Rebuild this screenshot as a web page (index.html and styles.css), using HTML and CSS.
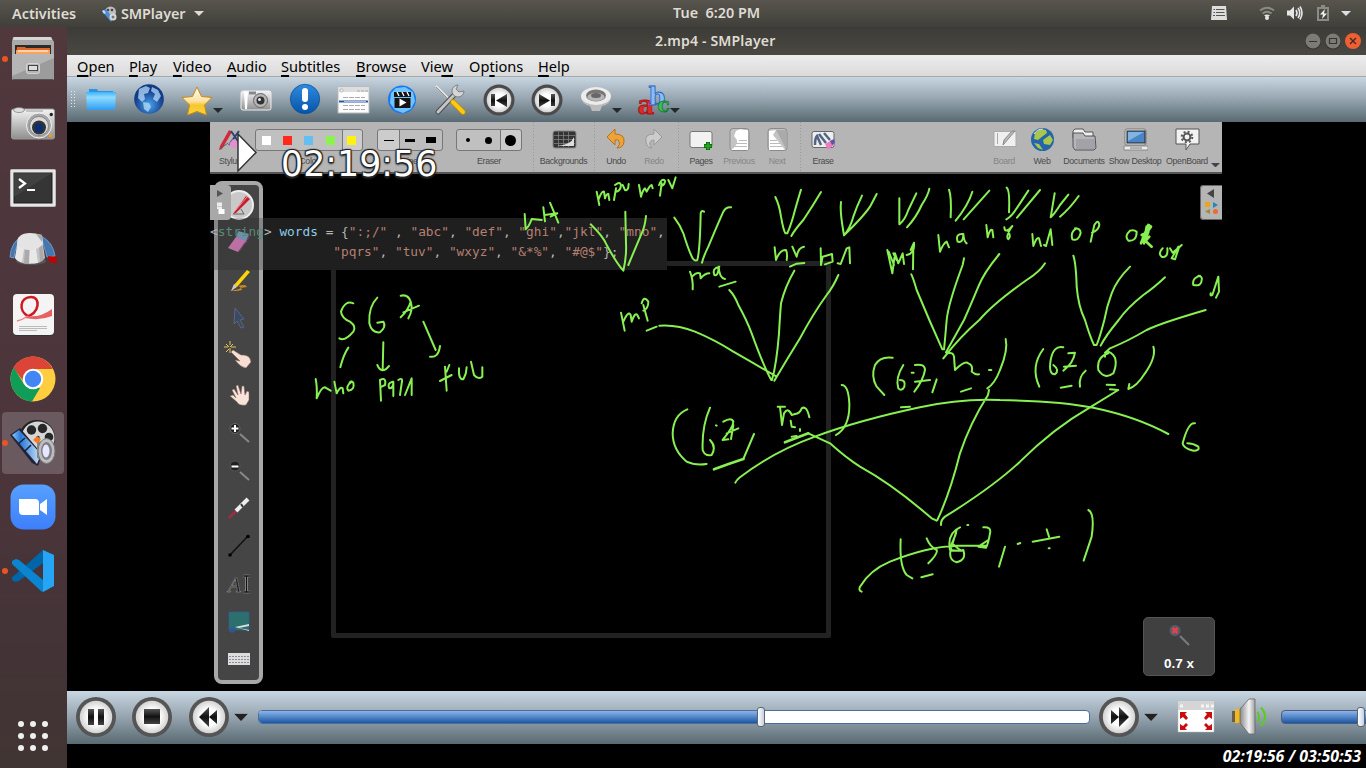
FILE: index.html
```html
<!DOCTYPE html>
<html lang="en">
<head>
<meta charset="utf-8">
<title>2.mp4 - SMPlayer</title>
<link rel="stylesheet" href="styles.css">
</head>
<body>
<svg class="defs" width="0" height="0" aria-hidden="true">
  <defs>
    <linearGradient id="silver" x2="0" y2="1"><stop stop-color="#f4f4f4"/><stop offset="1" stop-color="#8f8f8f"/></linearGradient>
    <linearGradient id="dark" x2="0" y2="1"><stop stop-color="#555"/><stop offset=".5" stop-color="#111"/><stop offset="1" stop-color="#444"/></linearGradient>
    <radialGradient id="disc"><stop offset=".5" stop-color="#fff"/><stop offset="1" stop-color="#d2d2d2"/></radialGradient>
    <radialGradient id="globe" cx=".5" cy=".7"><stop stop-color="#4aa4ee"/><stop offset="1" stop-color="#123a86"/></radialGradient>
    <linearGradient id="folder" x2="0" y2="1"><stop stop-color="#3fb4fb"/><stop offset=".3" stop-color="#8fdcff"/><stop offset="1" stop-color="#2e9df2"/></linearGradient>
    <linearGradient id="gold" x2="0" y2="1"><stop stop-color="#fffdf0"/><stop offset=".5" stop-color="#fbe3a8"/><stop offset=".65" stop-color="#f9c52c"/><stop offset="1" stop-color="#fbd63c"/></linearGradient>
    <linearGradient id="blueball" x2="0" y2="1"><stop stop-color="#2f8ade"/><stop offset="1" stop-color="#0654a8"/></linearGradient>
    <linearGradient id="zoomg" x2="0" y2="1"><stop stop-color="#57a0ff"/><stop offset="1" stop-color="#3d7ffb"/></linearGradient>
    <linearGradient id="film"><stop stop-color="#8ac6f5"/><stop offset=".3" stop-color="#2a79d8"/><stop offset="1" stop-color="#d3e6f8"/></linearGradient>
    <linearGradient id="cone" x2="1" y2="0"><stop stop-color="#8a8a8a"/><stop offset=".6" stop-color="#f4f4f4"/><stop offset="1" stop-color="#a0a0a0"/></linearGradient>
  </defs>
</svg>
<div class="desktop">
  <header class="topbar">
    <span class="activities">Activities</span>
    <svg class="appicon" width="16" height="16" viewBox="0 0 16 16"><circle cx="9.500" cy="6" r="5.500" fill="#bdbdbd"/><circle cx="7" cy="4" r="1.300" fill="#444"/><circle cx="11" cy="4" r="1.300" fill="#444"/><path d="M1 5l4-2 7 9-2 4z" fill="#4b8fd8"/><path d="M1 5l2-1 2 3-2 1z" fill="#bcdcf8"/><circle cx="12" cy="11" r="3.500" fill="#d8d8d8"/><circle cx="12" cy="11" r="1.500" fill="#777"/></svg>
    <span class="appname">SMPlayer</span>
    <i class="caret"></i>
    <span class="clock">Tue&nbsp; 6:20 PM</span>
    <svg class="tray" width="160" height="27" viewBox="1206 0 160 27">
      <path d="M1212 6h14l1 14h-16z" fill="#dedede"/><path d="M1213.500 9.500h11M1213.500 12.500h11M1213 15.500h12" stroke="#57554e" stroke-width="1"/><path d="M1215.500 7v10" stroke="#dedede"/>
      <g fill="none" stroke="#8c8a85" stroke-width="1.800"><path d="M1260 10.500q7-5.500 14 0"/><path d="M1262.500 13.500q4.500-3.500 9 0"/></g><path d="M1264 15.500q3-2.200 6 0l-3 2z" fill="#e6e6e6"/><circle cx="1267" cy="18" r="2" fill="#e6e6e6"/>
      <path d="M1287 10.500h3l4-4v13l-4-4h-3z" fill="#e6e6e6"/><g fill="none" stroke="#e6e6e6" stroke-width="1.600"><path d="M1296 10q2 3 0 6M1298 8q3.500 5 0 10M1300 6.500q4 6.500 0 13"/></g>
      <path d="M1318 8h10v12h-10zM1321 6h4" fill="none" stroke="#8c8a85" stroke-width="2"/><path d="M1325 9l-5 5.500h3l-1 4.500 5-5.500h-3z" fill="#f0f0f0"/>
      <path d="M1341 11h10l-5 5z" fill="#dedede"/>
    </svg>
  </header>
  <div class="main">
    <nav class="dock">
      <div class="slot running"><svg width="46" height="46" viewBox="10 36 46 46"><path d="M13 37h38l3 5v35h-42V42z" fill="#a9a9a9"/><path d="M14 37h37l1 3H13z" fill="#d6d6d6"/><path d="M15 45h36v10H15z" fill="#2b2b2b"/><path d="M17 47h8l1 1h24v7H16z" fill="#e0672a"/><path d="M16 50h34v5H16z" fill="#f5a45e"/><path d="M18 51h30" stroke="#fff"/><path d="M12 54h42v26H12z" fill="#9c9c9c"/><path d="M12 54h42v4L12 76z" fill="#b5b5b5"/><path d="M12.500 79.500h41" stroke="#555"/><rect x="26.500" y="63.500" width="13" height="10" rx="2" fill="#b5b5b5" stroke="#d5d5d5"/><rect x="28.500" y="65.500" width="9" height="5" fill="#ddd" stroke="#444"/></svg></div>
      <div class="slot"><svg width="46" height="46" viewBox="10 101 46 46"><rect x="11.500" y="110" width="43" height="30" rx="2" fill="url(#silver)" stroke="#9b9b9b"/><ellipse cx="19" cy="111" rx="5.500" ry="2.500" fill="#ddd" stroke="#777" stroke-width=".7"/><path d="M26 112h17" stroke="#999"/><circle cx="39" cy="126.500" r="12.500" fill="#a5a5a5" stroke="#f2f2f2"/><circle cx="39" cy="127" r="9.500" fill="#dcdcdc" stroke="#888"/><circle cx="39" cy="128.500" r="7" fill="#333"/><rect x="35" y="125" width="8" height="8" rx="2" fill="#0c2f73"/><circle cx="51.300" cy="115.500" r="1.700" fill="#222"/><rect x="49" y="135" width="3" height="3" fill="#f39a1f"/></svg></div>
      <div class="slot"><svg width="46" height="46" viewBox="10 165 46 46"><rect x="10.500" y="170.500" width="45" height="37" rx="1" fill="#e6e6e6" stroke="#bbb"/><rect x="14" y="174" width="38" height="30" fill="#353535" stroke="#1d1d1d"/><path d="M14 174h38L14 198z" fill="#4a4a4a" opacity=".6"/><path d="M19 180l6 4.500-6 4.500M27 191h8" fill="none" stroke="#fff" stroke-width="2.200"/></svg></div>
      <div class="slot"><svg width="50" height="46" viewBox="8 228 50 46"><path d="M10 257q1-16 14-22-9 10-10 23zM41 236q12 6 14 20l-8 1z" fill="#4676ae" stroke="#6b9acb"/><path d="M48 256l9 1-1 7-7-3z" fill="#c40000"/><ellipse cx="31" cy="261" rx="15" ry="4" fill="#555"/><path d="M18 238q13-8 24 0l3 20q-4 6-15 6t-15-6z" fill="#c4c4c4"/><path d="M18 242l6 7-2 13q-5-1-7-4zM30 249h6l2 14h-9z" fill="#f4f4f4" opacity=".75"/><path d="M25 249l4-1v16h-5zM39 247l3-3 2 15-4 3z" fill="#999" opacity=".6"/><path d="M17 244q0-11 13-11 5 0 12 2l1 9q-5 6-13 6-9 0-13-6z" fill="#e4e4e4"/><path d="M36 234l6 1v7z" fill="#aaa"/></svg></div>
      <div class="slot"><svg width="46" height="46" viewBox="10 291 46 46"><rect x="13" y="293" width="41" height="42" rx="4" fill="#333"/><rect x="13" y="293" width="41" height="41" rx="4" fill="#f4f4f4"/><path d="M26 316c14-4 15-20 5-20-11 0-13 14-3 19" fill="none" stroke="#cf1820" stroke-width="2.500"/><path d="M27 315q13 2 25-7v7q-12 5-27 2z" fill="#e66064"/><path d="M17 320q5-1 11-5" stroke="#ef8585" stroke-width="1.500" fill="none"/><path d="M19 325.500h28M19 327.500h28M19 329.500h18" stroke="#bbb"/></svg></div>
      <div class="slot"><svg width="46" height="46" viewBox="10 356 46 46"><circle cx="33" cy="379" r="22.500" fill="#ffcd40"/><path d="M33 356.500a22.500 22.500 0 0 1 19.800 12.500H33L25 383 13.200 368A22.500 22.500 0 0 1 33 356.500z" fill="#db4437"/><path d="M13.800 367.500L24.500 385 33 388h7l-8 13.500A22.500 22.500 0 0 1 13.800 367.500z" fill="#0f9d58"/><circle cx="33" cy="379" r="10.300" fill="#fff"/><circle cx="33" cy="379" r="8.200" fill="#4285f4"/></svg></div>
      <div class="slot running active"><svg width="48" height="48" viewBox="9 419 48 48"><circle cx="38" cy="438" r="18" fill="#222"/><circle cx="39" cy="438" r="16.500" fill="#d6d6d6"/><g fill="#272727"><circle cx="32.500" cy="430" r="4.700"/><circle cx="43.500" cy="428.500" r="4.700"/><circle cx="50" cy="437" r="4.300"/><circle cx="39" cy="437.500" r="1.700"/></g><path d="M11 435l10-7 22 26-4 12-6-3z" fill="#223"/><path d="M13 435l7-5 22 24-4 10z" fill="url(#film)"/><path d="M19 444l7-6M25 452l7-7" stroke="#123" stroke-width="1.500"/><path d="M34 440l4-4 4 3-3 5z" fill="#f47a20"/><path d="M38 443l9-4v24l-9-5z" fill="#888"/><ellipse cx="47.500" cy="451" rx="8.500" ry="12.500" fill="#bdbdbd" stroke="#777"/><ellipse cx="47.500" cy="451" rx="5.500" ry="9" fill="#7d7d88"/><ellipse cx="47" cy="451" rx="3.500" ry="6.500" fill="#e6e6ff"/></svg></div>
      <div class="slot"><svg width="46" height="46" viewBox="10 484 46 46"><rect x="10.500" y="484.500" width="45" height="45" rx="13" fill="url(#zoomg)"/><path d="M19 499h16q4 0 4 4v12H23q-4 0-4-4zM40 504l7-5v16l-7-5z" fill="#fff"/></svg></div>
      <div class="slot running"><svg width="46" height="46" viewBox="10 548 46 46"><path d="M43 550L16 574l-4 3v3l3 2 4-1 24-18z" fill="#0065a9"/><path d="M12 564v-3l4-2 3 1 24 20v12l-2-1z" fill="#0a86d0"/><path d="M43 550l11 5v31l-11 6z" fill="#25a5f3"/></svg></div>
      <div class="apps"><i></i><i></i><i></i><i></i><i></i><i></i><i></i><i></i><i></i></div>
    </nav>
    <section class="window">
      <div class="titlebar"><span>2.mp4 - SMPlayer</span>
        <svg class="winbtns" width="61" height="28" viewBox="1305 27 61 28"><circle cx="1313" cy="41.500" r="8" fill="#33322e"/><circle cx="1333" cy="41.500" r="8" fill="#33322e"/><circle cx="1313" cy="41" r="7.500" fill="#7d7b75"/><circle cx="1333" cy="41" r="7.500" fill="#7d7b75"/><circle cx="1353" cy="41" r="8" fill="#ee5f34"/><path d="M1309 41.500h8M1329.500 38.500h7v5h-7z" fill="none" stroke="#35342f" stroke-width="1.200"/><path d="M1350 38l6 6m0-6l-6 6" stroke="#3d2a20" stroke-width="1.400"/></svg>
      </div>
      <div class="menubar"><span class="w52"><u>O</u>pen</span><span class="w44"><u>P</u>lay</span><span class="w54"><u>V</u>ideo</span><span class="w54"><u>A</u>udio</span><span class="w75"><u>S</u>ubtitles</span><span class="w65"><u>B</u>rowse</span><span class="w48">Vie<u>w</u></span><span class="w69">Op<u>t</u>ions</span><span><u>H</u>elp</span></div>
      <div class="toolbar">
        <i class="grip"></i>
        <div class="tool"><svg width="34" height="34" viewBox="84 82 34 34"><path d="M89 88h8l1 2h15v6H89z" fill="#2796e6"/><path d="M86 91h30l-1 18H87z" fill="url(#folder)"/></svg></div>
        <div class="tool"><svg width="34" height="34" viewBox="132 82 34 34"><circle cx="149" cy="98" r="14.800" fill="url(#globe)"/><path d="M139 88l7-3 4 2-2 5-4 1 1 5-3 3-4-4zM152 86l6 3 3 6-4 6-4-3 2-5-4-3zM143 101l6 1 2 4-3 5-4-3z" fill="#b4dbfa" opacity=".75"/></svg></div>
        <div class="tool"><svg width="34" height="34" viewBox="180 82 34 34"><path d="M197 86l4.500 9.500 10.500 1-7.500 7.500 2 10-9.500-3.500-9.500 3.500 2-10-7.500-7.500 10.500-1z" fill="url(#gold)" stroke="#c98a12" stroke-width="1" stroke-linejoin="round"/></svg><b class="drop"></b></div>
        <i class="gap"></i>
        <div class="tool wide"><svg width="34" height="34" viewBox="239 82 34 34"><rect x="241" y="90" width="30" height="19" rx="2" fill="url(#silver)" stroke="#eee"/><path d="M244 90l1 18h2l1-17z" fill="#fff"/><rect x="249" y="90.500" width="7" height="3" fill="#888"/><circle cx="260.500" cy="99.500" r="7" fill="#b7b7b7" stroke="#666"/><circle cx="260.500" cy="99.500" r="4" fill="#333"/><circle cx="259.500" cy="98.500" r="1.500" fill="#dbe8ff"/></svg></div>
        <div class="tool wide"><svg width="34" height="34" viewBox="288 82 34 34"><circle cx="305" cy="98" r="14.700" fill="url(#blueball)" stroke="#0a4d94" stroke-width=".7"/><rect x="302" y="87" width="6" height="14" rx="3" fill="#fff"/><circle cx="305" cy="106" r="3" fill="#fff"/></svg></div>
        <div class="tool wide"><svg width="34" height="34" viewBox="336 82 34 34"><path d="M338 86h31v26h-31z" fill="#fdfdfd" stroke="#b8b8b8"/><path d="M338 86h31v5h-31z" fill="#ddd"/><circle cx="341.500" cy="89.500" r="1.600" fill="#eee" stroke="#999" stroke-width=".6"/><path d="M357 90h3m1 0h3m1 0h3" stroke="#aaa"/><path d="M343 96.500h22M343 104.500h22M343 108.500h22" stroke="#aaa" stroke-dasharray="5 1"/><path d="M339 100.500h29" stroke="#28589e" stroke-width="2"/><path d="M344 100.500h22" stroke="#fff" stroke-width=".6"/></svg></div>
        <div class="tool wide"><svg width="34" height="34" viewBox="384 82 34 34"><circle cx="401" cy="98.500" r="14" fill="#1878ee"/><path d="M390 92l5-5 9-1 8 5 2 9-4 8-8 4-8-3-5-7z" fill="#6fc3ff"/><path d="M393.500 97h16v10h-16z" fill="#151515"/><path d="M393 91h17v5h-17z" fill="#151515"/><path d="M396 91l2 4m3-4l2 4m3-4l2 4" stroke="#fff" stroke-width="1.300"/><path d="M398.500 97.500l7 4-7 4z" fill="#fff"/></svg></div>
        <div class="tool wide"><svg width="34" height="34" viewBox="433 82 34 34"><path d="M436 85l15 15" stroke="#e6e6e6" stroke-width="2.200"/><path d="M436 86l15 15" stroke="#555" stroke-width=".6"/><path d="M438 111l17-18" stroke="#4d4d4d" stroke-width="5" stroke-linecap="round"/><path d="M438 111l17-18" stroke="#c4c4c4" stroke-width="3" stroke-linecap="round"/><path d="M464 90a6 6 0 1 1-6-6l-2 4 3 3z" fill="#d5d5d5" stroke="#666" stroke-width=".7"/><path d="M453 101l10 10" stroke="#b98b00" stroke-width="5.500" stroke-linecap="round"/><path d="M453 101l10 10" stroke="#fcc914" stroke-width="4" stroke-linecap="round"/></svg></div>
        <div class="tool wide"><svg width="34" height="34" viewBox="482 82 34 34"><circle cx="499" cy="99" r="15.500" fill="#4b4b4b"/><circle cx="499" cy="99" r="12.300" fill="url(#disc)"/><path d="M491 93h4v12h-4zM507 93v13l-11-6.500z" fill="url(#dark)"/></svg></div>
        <div class="tool wide"><svg width="34" height="34" viewBox="530 82 34 34"><circle cx="547" cy="99" r="15.500" fill="#4b4b4b"/><circle cx="547" cy="99" r="12.300" fill="url(#disc)"/><path d="M551 93h4v12h-4zM539 93v13l11-6.500z" fill="url(#dark)"/></svg></div>
        <div class="tool wide"><svg width="34" height="34" viewBox="579 82 34 34"><path d="M581 95h30q0 8-9 10l-2 5h-8l-2-5q-9-2-9-10z" fill="#bcbcbc"/><ellipse cx="596" cy="95" rx="15" ry="9" fill="#ececec"/><ellipse cx="596" cy="94.500" rx="10" ry="6" fill="#777"/><ellipse cx="596" cy="96" rx="8.500" ry="4" fill="#b7b7b7"/><ellipse cx="596" cy="94.500" rx="5" ry="2.500" fill="#666"/></svg><b class="drop"></b></div>
        <i class="gap gap10"></i>
        <div class="tool"><svg width="34" height="34" viewBox="637 82 34 34" overflow="visible"><g class="abc"><text x="637.500" y="113" font-size="26" fill="#e02929" stroke="#a51212">a</text><text x="648.500" y="104" font-size="24" fill="#8abcf7" stroke="#1e5ec0">b</text><text x="657.500" y="111" font-size="20" fill="#3bc25b" stroke="#0f7a2c">c</text></g></svg><b class="drop"></b></div>
      </div>
      <div class="video">
        <div class="board">
          <div class="boardbar">
            <div class="bitem w40"><svg width="26" height="26" viewBox="217 127 26 26"><path d="M229 130l3 2-10 17-3 1 1-4z" fill="#d3283a"/><path d="M231 131l9 13M239 131l-10 14" stroke="#2d4275" stroke-width="2"/><path d="M233 139l6 5-5 5-5-5z" fill="#e78ccc"/><path d="M220 149l8-6" stroke="#567"/></svg><span>Stylus</span></div>
            <div class="bitem w118"><div class="pill p108"><i class="c1"></i><i class="c2"></i><i class="c3"></i><i class="c4"></i><i class="c5 on"></i></div><span class="under">Color</span></div>
            <div class="bitem w84"><div class="pill p66 line"><i></i><i></i><i></i></div><span class="under">Line</span></div>
            <div class="bitem w74"><div class="pill p66 dots"><i></i><i></i><i class="on"></i></div><span>Eraser</span></div>
            <div class="bitem w61 sep ml"><svg width="26" height="26" viewBox="550 127 26 26"><rect x="552" y="131" width="23" height="17" rx="2" fill="#333" stroke="#888"/><path d="M553 135.500h21M553 139.500h21M553 143.500h21M557.500 132v15M562.500 132v15M567.500 132v15" stroke="#888" stroke-width=".7"/><path d="M556 146q14-1 17-9v9z" fill="#ddd"/></svg><span>Backgrounds</span></div>
            <div class="bitem w44 sep"><svg width="26" height="26" viewBox="603 127 26 26"><path d="M607 137l8-8v5q10 0 9 8-1 6-7 6 4-4 2-7-1-2-4-1v5z" fill="#eda23a" stroke="#b9701a"/></svg><span>Undo</span></div>
            <div class="bitem w32 off"><svg width="26" height="26" viewBox="641 127 26 26"><path d="M662 137l-8-8v5q-10 0-8 8 1 6 6 6-4-4-1-7 1-1 3-1v5z" fill="#ccc" stroke="#999"/></svg><span>Redo</span></div>
            <div class="bitem w46 sep ml8"><svg width="26" height="26" viewBox="688 127 26 26"><rect x="690" y="131.500" width="22" height="16" rx="2" fill="#f2f2f2" stroke="#777"/><path d="M708 142v8M704 146h8" stroke="#075c07" stroke-width="4"/><path d="M708 142.500v7M704.500 146h7" stroke="#20a51f" stroke-width="2.500"/></svg><span>Pages</span></div>
            <div class="bitem w30 off"><svg width="26" height="26" viewBox="726 127 26 26"><rect x="730" y="128.500" width="19" height="22" rx="3" fill="#c3c3c3" stroke="#8b8b8b"/><path d="M736 131q4-3 8-1h4v20h-17q7-5 6-10l-3-4z" fill="#fff"/><path d="M739 140.500h8M736 143.500h11M733 146.500h14" stroke="#bbb"/></svg><span>Previous</span></div>
            <div class="bitem w46 off"><svg width="26" height="26" viewBox="764 127 26 26"><rect x="768" y="128.500" width="19" height="22" rx="3" fill="#c3c3c3" stroke="#8b8b8b"/><path d="M769 131l7-1-3 5 12 15h-16z" fill="#fff"/><path d="M776 130h10v19z" fill="#aaa"/><path d="M770 140.500h7M770 143.500h10M770 146.500h12" stroke="#bbb"/></svg><span>Next</span></div>
            <div class="bitem w46 sep"><svg width="26" height="26" viewBox="810 127 26 26"><rect x="812" y="131.500" width="22" height="16" rx="2" fill="#eee" stroke="#666"/><path d="M815 145q0-7 2-9l4 9m-2-11l7 9m-2-10l6 7" fill="none" stroke="#536484" stroke-width="2.500"/><path d="M825 144l7-4 3 4-7 6z" fill="#eb7dc0"/><path d="M830 141l4-2 1 4-3 2z" fill="#5a55a8"/></svg><span>Erase</span></div>
            <i class="fill"></i>
            <div class="bitem w38 off"><svg width="26" height="26" viewBox="991 127 26 26"><rect x="994" y="131.500" width="22" height="15" fill="#f0f0f0" stroke="#aaa"/><path d="M997.500 133v11" stroke="#aaa"/><path d="M1015 131l-12 14 1-5 8-9z" fill="#bbb" stroke="#888"/></svg><span>Board</span></div>
            <div class="bitem w38"><svg width="26" height="26" viewBox="1029 127 26 26"><circle cx="1042.500" cy="139.500" r="11.500" fill="#2464aa"/><path d="M1035 133l5-4 6 1 1 3-4 3-5 4-4-1zM1043 140l7-5 3 5-3 5-6-1zM1034 143l5 1 4 6-5-2z" fill="#aac64b"/><path d="M1034 134q3-5 9-5" stroke="#cfe4fa" fill="none"/></svg><span>Web</span></div>
            <div class="bitem w46"><svg width="26" height="26" viewBox="1071 127 26 26"><path d="M1073 131l2-2h8l2 3h8v6h-20z" fill="#efefef" stroke="#555"/><path d="M1073 133h10l2 3h10l1 12-2 2h-19l-2-3z" fill="#b5b5ba" stroke="#555"/><path d="M1076 139h19v10h-19z" fill="#a2a2a9"/></svg><span>Documents</span></div>
            <div class="bitem w56"><svg width="26" height="26" viewBox="1122 127 26 26"><rect x="1125" y="129" width="21" height="16" rx="2" fill="#eee" stroke="#777"/><rect x="1127" y="131" width="18" height="12" fill="#4a86c7" stroke="#222"/><path d="M1128 132h16l-16 9z" fill="#82b3e2"/><path d="M1124 146h24v4h-24z" fill="#ededed" stroke="#888"/><path d="M1130 148h12" stroke="#777"/></svg><span>Show Desktop</span></div>
            <div class="bitem w48"><svg width="26" height="26" viewBox="1175 127 26 26"><path d="M1177 129h23v15h-9l-4 6v-6h-10z" fill="#f2f2f2" stroke="#555"/><circle cx="1188" cy="137" r="3.400" fill="none" stroke="#555" stroke-width="2"/><circle cx="1188" cy="137" r="5.300" fill="none" stroke="#555" stroke-width="2" stroke-dasharray="2 2.160"/></svg><span>OpenBoard</span></div>
            <b class="more"></b>
          </div>
          <div class="sketch"></div>
          <div class="palette">
            <svg width="28" height="30" viewBox="224 190 28 30"><circle cx="238" cy="205" r="15" fill="#eee"/><circle cx="238" cy="205" r="13" fill="#c9c9c9"/><path d="M245 196l4 3-14 14-3 1z" fill="#c31f30"/><path d="M246 197l-13 15" stroke="#ff8c92"/><path d="M232 214h11l-3-5" fill="none" stroke="#666"/></svg>
            <svg width="28" height="30" viewBox="224 228 28 30"><path d="M237 232l11 3-3 9-10-5z" fill="#86b8d8"/><path d="M235 238l10 4-8 11-10-4z" fill="#ee8bd0"/><path d="M237 253l8-11 3-7v4l-9 13z" fill="#a04a85"/></svg>
            <svg width="28" height="30" viewBox="224 265 28 30"><path d="M228 291q14-2 11-4-4-2 5-2l2 2-7 1q6 2-4 3z" fill="#c98a22"/><path d="M246 270l3 2-13 15-3-2z" fill="#ffd40a"/><path d="M233 284l3 3-6 4z" fill="#ccc"/></svg>
            <svg width="28" height="30" viewBox="224 303 28 30"><path d="M234 308l9 11-4 1 4 7-3 1-4-7-3 3z" fill="#3c4a66" stroke="#59667f"/></svg>
            <svg width="28" height="30" viewBox="224 341 28 30"><path d="M223 347h4m3 0h5m-6-6v4m0 3v5m-4-9l3 3m4-3l-3 3m-4 5l3-3" stroke="#e8c65a" stroke-width="1"/><path d="M232 350l8 5q9-1 10 7l-5 6q-6-1-11-8l5 1-9-9z" fill="#f7ded3" stroke="#7e6259" stroke-width=".5"/></svg>
            <svg width="28" height="30" viewBox="224 378 28 30"><path d="M229 395l3-1 3 3-4-8 2-1 4 6-2-9 2-1 3 9 1-8h2l1 9 2-4 2 1v8l-3 5q-7 1-9-3z" fill="#f9e2d9" stroke="#7e6259" stroke-width=".5"/></svg>
            <svg width="28" height="30" viewBox="224 416 28 30"><circle cx="234" cy="427.500" r="5" fill="#222" stroke="#666"/><path d="M230.500 427.500h7m-3.500-3.500v7" stroke="#fff" stroke-width="2"/><path d="M239 433l9 8" stroke="#888" stroke-width="2"/></svg>
            <svg width="28" height="30" viewBox="224 454 28 30"><circle cx="234" cy="465" r="5" fill="#222" stroke="#555"/><path d="M230.500 465.500h7" stroke="#fff" stroke-width="2"/><path d="M239 471l9 8" stroke="#888" stroke-width="2"/></svg>
            <svg width="28" height="30" viewBox="224 492 28 30"><path d="M228 517l9-9" stroke="#a02c40" stroke-width="2.500"/><path d="M235 510l12-12" stroke="#eee" stroke-width="4"/><path d="M240 503l2 3" stroke="#333" stroke-width="2"/></svg>
            <svg width="28" height="30" viewBox="224 530 28 30"><path d="M229 554l18-19" stroke="#111" stroke-width="1.500"/><circle cx="229" cy="554" r="1.800"/><circle cx="247" cy="535.500" r="1.800"/></svg>
            <svg width="28" height="30" viewBox="224 568 28 30"><text x="227" y="591" class="ai" font-size="21">A</text><path d="M245.500 575v16m-3-16h6m-6 16h6" fill="none" stroke="#aaa" stroke-width="2.600"/><path d="M245.500 575v16m-3-16h6m-6 16h6" fill="none" stroke="#111" stroke-width="1.300"/></svg>
            <svg width="28" height="30" viewBox="224 607 28 30"><rect x="228" y="612" width="20" height="18" fill="#2b706c" stroke="#2c5da0" stroke-dasharray="2 1"/><path d="M234 627l14-3v2l-10 2 10 2v1z" fill="#ddd"/><circle cx="231" cy="630" r="2" fill="none" stroke="#3555a0" stroke-width="1.500"/></svg>
            <svg width="28" height="30" viewBox="224 644 28 30"><rect x="227" y="652" width="22" height="12" fill="#ddd"/><path d="M228 655.500h20M228 658.500h20M228 661.500h20" stroke="#8c8c95" stroke-dasharray="2 1"/></svg>
          </div>
          <pre class="code"><s>&lt;</s><em>string</em><s>&gt;</s> <var>words</var> <s>=</s> <s>{</s>":;/" <s>,</s> "abc"<s>,</s> "def"<s>,</s> "ghi"<s>,</s>"jkl"<s>,</s> "mno"<s>,</s>
                "pqrs"<s>,</s> "tuv"<s>,</s> "wxyz"<s>,</s> "&amp;*%"<s>,</s> "#@$"<s>};</s></pre>
          <div class="ltab"><svg width="21" height="35" viewBox="210 185 21 35"><path d="M217 190l6 3.500-6 3.500z" fill="#555"/><path d="M217 202.500h5v4h-5zM217 207h5v2h-5z" fill="#eee"/><path d="M218.500 209h6v5h-6z" fill="#fff"/></svg></div>
          <div class="rtab"><svg width="22" height="35" viewBox="1200 185 22 35"><path d="M1214 189v9l-7-4.500z" fill="#444"/><path d="M1205 202h5v5h-5z" fill="#e8a51d"/><path d="M1213 202l5 3-5 3z" fill="#2289b5"/><path d="M1210 209v5l-5-2.500z" fill="#a68a30"/><circle cx="1215.500" cy="211.500" r="2.500" fill="#ee6a2d"/></svg></div>
          <div class="zoombox"><svg width="24" height="24" viewBox="1167 624 24 24"><circle cx="1175" cy="631.500" r="5.500" fill="#555d68"/><path d="M1172.500 629l5 5m0-5l-5 5" stroke="#ee3d4e" stroke-width="2.500"/><path d="M1180 637l9 9" stroke="#777c82" stroke-width="2"/></svg><span>0.7 x</span></div>
        </div>
        <svg class="ink" width="1299" height="569" viewBox="67 122 1299 569">
          <g transform="translate(340 50) scale(.33333)">
            <path d="M770 425L778 465M775 450Q785 422 792 425L795 445Q800 430 805 432L808 450M828 415L822 450M825 405Q845 390 842 412Q838 425 826 425M848 405L855 420Q865 425 866 402M897 405L903 440Q908 420 915 415L920 425Q930 405 935 405L938 415M965 400L960 437M957 405Q965 383 975 392Q975 405 963 408M985 390L997 415L1007 382"/>
            <path d="M554 492L557 538Q568 528 575 507L605 510M610 472L615 514M630 458L655 518M614 495L652 490L632 500"/>
            <path d="M752 523Q790 560 800 585Q830 640 850 662Q860 620 858 580L856 485M865 645Q890 585 905 550Q915 530 918 498"/>
          </g>
          <g transform="translate(680 110) scale(.33333)">
            <path d="M-17 323Q0 345 10 370Q25 420 38 445Q46 455 52 450Q60 420 62 310Q64 300 72 305M66 458Q70 440 85 410Q110 350 130 305Q138 290 153 292"/>
            <path d="M286 261Q298 285 303 320Q310 360 316 370L322 370Q335 340 345 300Q355 265 363 239M334 378Q345 358 370 330Q400 285 423 246M483 276Q480 300 487 345L492 376Q510 355 520 320Q530 290 546 257M492 376Q550 320 570 290L590 252M658 265L658 343Q675 330 685 300L709 250M681 352Q710 320 725 285Q745 255 748 236M807 239Q815 260 812 322M827 332Q865 285 877 245M851 328L928 242"/>
            <path d="M284 412L288 450Q300 418 318 420Q323 430 320 450M337 410L350 440M350 440Q355 412 372 410M330 470L350 461L373 459M422 415L423 465L428 440L456 432L458 455L435 463M473 460L482 462L500 415L508 412L510 460"/>
            <path d="M622 420L637 490M637 490L645 430L655 460L668 430L672 462M640 430L650 450M626 425L642 465M692 420L702 398Q705 430 680 435M700 405L699 478M775 375L780 425Q790 400 800 395L807 412M850 372Q825 370 833 395Q850 400 850 372Q852 395 860 400"/>
            <path d="M30 485Q40 510 38 538M36 500Q50 485 60 490L62 505Q75 490 88 490M118 470Q95 475 103 495Q115 500 116 470Q118 505 135 507M118 530L167 515"/>
          </g>
          <g transform="translate(960 110) scale(.33333)">
            <path d="M140 233Q150 240 147 307M139 328Q155 320 170 295L205 242M171 323L240 240M284 250L272 322Q285 310 300 285L325 254M300 320Q330 295 356 258"/>
            <path d="M79 345L83 382Q90 355 97 360L100 382M133 352Q135 370 150 355L157 348Q135 380 145 388Q155 380 143 360M217 372L220 408Q230 380 237 385L243 408M252 405L258 408L272 358L277 405M350 355Q330 365 337 388Q355 395 362 370Q362 355 345 355M392 395L403 345Q415 325 418 345Q415 362 396 368M510 362Q492 378 505 392Q530 395 530 365Q522 358 510 362"/>
            <path d="M543 400L565 345L573 350L548 385L575 410M560 350L552 400M545 375L565 365L552 398L568 380" stroke-width="8"/>
            <path d="M608 415Q593 430 605 440Q625 445 622 415M630 415L638 428Q655 415 665 405M655 410L635 445L645 448L657 412M720 497Q695 505 700 525Q725 530 725 510Q728 500 715 497M752 550Q750 560 757 555L775 500L777 545L768 563"/>
          </g>
          <g transform="translate(290 280) scale(.33333)">
            <path d="M190 70Q165 60 153 95Q155 115 180 125Q200 140 190 155Q165 185 148 175M262 53Q235 80 238 130Q245 160 270 157Q290 140 280 125L262 128M332 47Q355 42 362 65Q355 90 332 112M340 97L387 77M362 65Q370 90 355 115M400 125L437 210M420 230Q445 235 450 198M280 187L278 270M262 255Q275 285 297 258M175 203Q160 225 151 262"/>
            <path d="M77 297Q82 320 80 355Q95 320 105 322L122 332M133 305L140 340Q150 318 158 325L160 340M185 305Q165 320 175 332Q195 330 190 308Q182 300 178 310M270 300L273 362M270 300Q290 290 285 315L275 320M308 305Q290 310 298 325Q310 325 310 305L310 348M325 300Q340 290 335 310L330 345M345 345L365 295L365 345M465 260L470 332M450 303L485 285M470 275L478 255M507 265Q505 300 520 298Q530 280 530 262M543 245L552 285Q565 300 577 290L577 262"/>
          </g>
          <g transform="translate(600 290) scale(.33333)">
            <path d="M388 0Q405 18 415 45Q440 90 455 130Q475 185 490 220Q505 255 514 270M583 -58Q555 -10 543 40Q540 75 537 130Q530 220 516 270M715 -45Q700 -10 680 15Q640 70 600 145Q560 210 523 272M178 107Q230 103 285 125Q345 150 400 185Q470 225 530 260M140 122L170 110"/>
            <path d="M63 68L74 122M70 95Q85 60 92 75L95 95Q105 65 112 75L117 85M130 45L143 92M125 40Q132 15 145 35Q145 55 130 62M262 358Q220 375 218 430Q218 480 260 515Q285 527 320 522M330 353Q305 410 308 480Q315 500 335 495Q350 470 330 450M348 406l2 1M370 395Q395 380 400 395Q400 410 368 450L385 448M400 405L393 447M380 430L415 415M462 432L430 507M533 350L555 350M540 350L546 405L552 370Q565 350 575 375L585 372Q600 370 605 355Q620 345 628 382M572 392L575 410L585 412M600 417v6M575 440L590 438M725 285Q745 285 748 340Q750 410 708 435"/>
            <path d="M342 538Q390 520 430 507M555 457L625 430" stroke-width="8"/>
          </g>
          <g transform="translate(860 320) scale(.33333)">
            <path d="M-374 488Q-370 480 -360 472Q-260 395 -135 350Q0 300 180 262Q300 235 420 240Q600 243 700 263Q830 290 925 342M-155 340L-90 370Q-40 415 0 440Q100 495 215 595L230 602M387 210L384 225Q330 310 300 400Q270 520 232 600M243 615Q242 600 255 590Q400 500 480 425Q580 325 690 262L775 210L750 208"/>
            <path d="M154 -137Q160 -125 170 -90L208 0L247 88M312 -185L308 -165Q265 -50 260 0Q255 60 252 88M418 -198Q370 -140 355 -100Q330 -40 312 0L258 97M555 -170Q540 -145 500 -120Q400 -50 358 0Q300 50 250 115M640 -193Q648 -170 650 -100Q655 -40 675 0Q690 50 702 75L710 75Q720 50 733 0Q740 -40 755 -80Q770 -120 810 -160M915 -128Q880 -95 850 -75Q800 -35 776 0Q735 50 722 77M1037 -30Q900 10 860 30Q800 65 750 85L735 98"/>
            <path d="M98 113Q60 108 45 135Q32 170 50 200L73 225M130 135Q105 175 115 205Q125 215 133 200Q138 180 120 180M155 158h6M165 135Q195 130 195 150Q190 180 163 215M165 185L210 180M230 178L217 217M123 262L150 260M262 100Q280 95 282 110L285 150Q315 120 325 130Q340 135 335 155Q345 165 357 163M303 215L333 205M387 150h7M437 57Q445 90 420 150Q405 190 382 205"/>
            <path d="M550 87Q510 140 538 200M610 82Q580 75 572 120Q565 165 585 163Q600 150 580 135M625 100L645 98Q640 130 610 152M612 140L648 137M677 152Q655 170 660 200M602 203L635 197M745 100Q710 110 715 150Q735 180 760 160Q780 110 745 95Q735 95 735 110M740 194L765 195M880 80Q890 110 855 160Q830 200 805 207L808 192M1005 310Q985 305 968 370Q970 385 1000 392Q1020 392 1015 380Q1000 370 982 370"/>
            <path d="M122 658Q118 740 140 765L157 775M200 655Q210 680 230 690Q235 700 205 730M300 622Q260 640 270 690Q300 695 310 690Q320 720 290 727Q265 720 272 690L290 630M275 670L300 690M270 685L288 640M322 615h3M370 622Q395 620 390 640Q385 670 378 683L355 680L385 660M5 815Q-5 812 0 800Q30 750 90 725Q200 680 290 677L380 677M435 680L417 740M473 672l8 -3M518 665L598 650M560 628L567 650M566 685h3M685 570Q705 580 695 650L671 722M184 772L218 763"/>
          </g>
        </svg>
        <svg class="osdplay" width="24" height="46" viewBox="0 0 24 46"><path d="M2 5v37l18-18.500z" fill="#fff" stroke="#333" stroke-width="1.500"/></svg>
        <div class="osd">02:19:56</div>
      </div>
      <div class="controls">
        <svg class="round" width="40" height="40" viewBox="0 0 40 40"><circle cx="20" cy="20" r="20" fill="#555"/><circle cx="20" cy="20" r="16.200" fill="url(#disc)"/><path d="M12 12h6v16h-6zM22 12h6v16h-6z" fill="url(#dark)"/></svg>
        <svg class="round" width="40" height="40" viewBox="0 0 40 40"><circle cx="20" cy="20" r="20" fill="#555"/><circle cx="20" cy="20" r="16.200" fill="url(#disc)"/><path d="M12 12h16v15H12z" fill="url(#dark)"/></svg>
        <svg class="round" width="40" height="40" viewBox="0 0 40 40"><circle cx="20" cy="20" r="20" fill="#555"/><circle cx="20" cy="20" r="16.200" fill="url(#disc)"/><path d="M10 20l10-10v20zM20 20l8-7v14z" fill="url(#dark)"/></svg>
        <svg class="menuarrow" width="16" height="9" viewBox="0 0 16 9"><path d="M.5.500h15L8 8.500z" fill="#222" stroke="#c2cbd1" stroke-width=".5"/></svg>
        <div class="seek"><i class="done"></i><b class="knob"></b></div>
        <svg class="round ff" width="40" height="40" viewBox="0 0 40 40"><circle cx="20" cy="20" r="20" fill="#555"/><circle cx="20" cy="20" r="16.200" fill="url(#disc)"/><path d="M30 20L20 10v20zM20 20l-8-7v14z" fill="url(#dark)"/></svg>
        <svg class="menuarrow" width="16" height="9" viewBox="0 0 16 9"><path d="M.5.500h15L8 8.500z" fill="#222" stroke="#c2cbd1" stroke-width=".5"/></svg>
        <svg class="full" width="38" height="32" viewBox="1176 700 38 32"><path d="M1177 700h36v31h-36z" fill="#fff" stroke="#bbb" stroke-width=".5"/><path d="M1177 700h36v9h-36z" fill="#d5d5d5"/><path d="M1179 705h3m18 0h3m2 0h3m2 0h3" stroke="#f5f5f5" stroke-width="3"/><path d="M1179 711h7l-2 2 3 4-2 2-3-3-3 2zM1211 711h-7l2 2-3 4 2 2 3-3 3 2zM1179 729h7l-2-2 3-3-2-2-3 3-3-2zM1211 729h-7l2-2-3-3 2-2 3 3 3-2z" fill="#c90d0d"/></svg>
        <svg class="speaker" width="36" height="38" viewBox="1230 698 36 38"><path d="M1231 711h4v11h-4z" fill="#665f4d"/><path d="M1234 709h6v14h-6z" fill="#f2b81d"/><path d="M1239 709l9-10h6v35h-6l-9-11z" fill="url(#cone)" stroke="#666" stroke-width=".8"/><path d="M1256.500 712q3 5 0 10M1260 707.500q8 9 0 18.500" fill="none" stroke="#59cf1b" stroke-width="2"/></svg>
        <div class="volume"><b class="knob"></b></div>
      </div>
      <footer class="status">02:19:56 / 03:50:53</footer>
    </section>
  </div>
</div>
</body>
</html>
```
FILE: styles.css
```css
* { box-sizing: border-box; }
body { margin: 0; background: #000; font-family: "Noto Sans", sans-serif; overflow: hidden; }
.defs { position: absolute; }
.desktop { width: 1366px; height: 768px; display: flex; flex-direction: column; overflow: hidden; }
.topbar { height: 27px; flex: none; display: flex; align-items: center; position: relative; padding-left: 12px; background: linear-gradient(#57554d, #403f3a); color: #dfdbd2; font-size: 14.4px; font-weight: 600; line-height: 27px; }
.activities { width: 89px; }
.appicon { flex: none; margin-right: 4px; }
.appname { width: 73px; letter-spacing: -.1px; }
.caret { border: 5px solid transparent; border-top-color: #dfdbd2; border-bottom: 0; }
.clock { position: absolute; left: 673px; top: -1px; }
.tray { margin-left: auto; }
.main { flex: 1; display: flex; min-height: 0; }
.dock { width: 67px; display: flex; flex-direction: column; background: linear-gradient(#50383d, #4b353b 60%, #433336 85%, #413533); }
.slot { height: 64px; display: flex; align-items: center; justify-content: center; position: relative; padding-right: 2px; }
.slot svg { flex: none; }
.running::before { content: ""; position: absolute; left: 2px; top: 29px; width: 6px; height: 6px; border-radius: 50%; background: #e95420; }
.active { height: 62px; margin: 1px 3px 1px 2px; border-radius: 4px; background: #6b5960; }
.active::before { left: 0; top: 28px; }
.apps { margin-top: auto; height: 64px; display: grid; grid-template-columns: repeat(3, 6px); gap: 6px; align-content: center; justify-content: center; padding-right: 1px; }
.apps i { height: 6px; border-radius: 50%; background: #f0f0f0; }
.window { flex: 1; display: flex; flex-direction: column; min-width: 0; }
.titlebar { height: 28px; background: linear-gradient(#3c3b37, #4a4842); color: #dfdbd2; font: 600 14.1px/28px "Noto Sans", sans-serif; display: flex; padding-left: 588px; letter-spacing: .15px; }
.winbtns { margin-left: auto; }
.menubar { height: 22px; background: linear-gradient(#ededed, #dadada); border-bottom: 1px solid #a5a7a8; display: flex; padding-left: 10px; font-size: 14.6px; line-height: 23px; color: #000; }
.menubar u { text-underline-offset: 3px; text-decoration-thickness: 1.5px; }
.w52 { width: 52px; } .w44 { width: 44px; } .w54 { width: 54px; } .w75 { width: 75px; } .w65 { width: 65px; } .w48 { width: 48px; } .w69 { width: 69px; }
.toolbar { height: 45px; display: flex; background: linear-gradient(#c8d6e1, #94a3ad 50%, #596a73); }
.grip { width: 7px; margin: 13px 0 14px 3px; background: radial-gradient(#e4ebf0 35%, transparent 45%) 0 0/3px 3px; }
.tool { width: 48px; position: relative; display: flex; align-items: center; justify-content: center; flex: none; }
.wide { width: 48.5px; }
.gap { width: 11px; } .gap10 { width: 10px; }
.drop { position: absolute; right: -2px; top: 31px; border: 5px solid transparent; border-top-color: #23282b; border-bottom: 0; }
.abc text { font-family: "DejaVu Serif", serif; font-weight: 700; stroke-width: .8px; }
.video { height: 569px; background: #000; position: relative; padding-left: 143px; }
.board { width: 1012px; height: 569px; position: relative; }
.boardbar { height: 52px; background: #b5b5b5; border-bottom: 2px solid #555; display: flex; font: 8.8px/10px "Liberation Sans", sans-serif; color: #4a4a4a; letter-spacing: -.35px; }
.bitem { display: flex; flex-direction: column; align-items: center; padding-top: 5px; white-space: nowrap; }
.bitem svg { flex: none; }
.bitem span { margin-top: 3px; }
.off span { color: #858585; }
.w40 { width: 40px; } .w118 { width: 118px; } .w84 { width: 84px; } .w74 { width: 74px; } .w61 { width: 61px; } .bitem.w44 { width: 44px; } .w32 { width: 32px; } .w46 { width: 46px; } .w30 { width: 30px; } .w38 { width: 38px; } .w56 { width: 56px; } .bitem.w48 { width: 48px; }
.sep { background: linear-gradient(#999 50%, transparent 50%) 0 0/1px 3px repeat-y; }
.ml { margin-left: 7px; } .ml8 { margin-left: 8px; }
.fill { flex: 1; }
.more { align-self: flex-end; margin: 0 2px 5px 0; width: 9px; border: 4px solid transparent; border-top-color: #444; border-bottom: 0; }
.pill { height: 22px; margin: 2px 0; border: 1px solid #777; border-radius: 3px; background: linear-gradient(#d0d0d0, #aaa); display: flex; align-items: center; justify-content: space-around; }
.p108 { width: 108px; } .p66 { width: 66px; }
.p108 i { width: 9px; height: 9px; }
.c1 { background: #fff; } .c2 { background: #ff2a1a; } .c3 { background: #62bff0; } .c4 { background: #8cf24e; } .c5 { background: #fff013; }
.p108 { background: linear-gradient(90deg, #c0c0c0 86px, #777 86px, #777 87px, #ccc 87px); }
.line i { background: #000; width: 10px; height: 1px; } .line i:nth-child(2) { height: 3px; } .line i:nth-child(3) { height: 6px; }
.line { background: linear-gradient(90deg, #ccc 21px, #777 21px, #777 22px, #bdbdbd 22px); }
.dots { display: grid; grid-template-columns: repeat(3, 1fr); justify-items: center; }
.dots i { background: #000; border-radius: 50%; width: 4px; height: 4px; } .dots i:nth-child(2) { width: 7px; height: 7px; } .dots i:nth-child(3) { width: 11px; height: 11px; }
.dots { background: linear-gradient(90deg, #c0c0c0 43px, #777 43px, #777 44px, #ccc 44px); }
.sketch { position: absolute; left: 121px; top: 139px; width: 500px; height: 377px; border: 5px solid #222; border-radius: 2px; }
.code { position: absolute; left: 0; top: 96px; width: 457px; height: 52px; margin: 0; padding-top: 4px; background: linear-gradient(90deg, rgba(31, 31, 31, .25) 53px, #1f1f1f 53px); color: #b57f72; font: 12.8px/20px "DejaVu Sans Mono", monospace; overflow: hidden; }
.code s { text-decoration: none; color: #b5b5b5; } .code em { font-style: normal; color: #568a79; } .code var { font-style: normal; color: #8ccbea; }
.palette { position: absolute; left: 4px; top: 59px; width: 49px; height: 503px; border: 4px solid #a8a8a8; border-radius: 8px; background: #454545; display: flex; flex-direction: column; align-items: center; gap: 7.95px; padding-top: 4.5px; }
.palette svg { flex: none; overflow: visible; }
.ai { font-family: "Liberation Serif", serif; font-style: italic; fill: #111; stroke: #999; stroke-width: .5px; }
.ltab { position: absolute; left: 0; top: 63px; width: 21px; height: 35px; background: #a8a8a8; border-radius: 0 4px 4px 0; }
.rtab { position: absolute; right: 0; top: 63px; width: 22px; height: 35px; background: #b5b5b5; box-shadow: inset 1px 0 #666, inset 0 1px #666, inset 0 -1px #666; border-radius: 4px 0 0 4px; }
.zoombox { position: absolute; left: 933px; top: 495px; width: 72px; height: 59px; border: 1px solid #555; border-radius: 5px; background: #404040; color: #fff; display: flex; flex-direction: column; align-items: center; padding-top: 5px; font: bold 13.5px/14px "Liberation Sans", sans-serif; gap: 10px; }
.ink { position: absolute; left: 0; top: 0; fill: none; stroke: #88f052; stroke-width: 6px; stroke-linecap: round; stroke-linejoin: round; }
.osdplay { position: absolute; left: 169px; top: 7px; }
.osd { position: absolute; left: 214px; top: 21px; font: 34.8px/42px "DejaVu Sans", sans-serif; color: #fff; text-shadow: 0 0 1px #222, 1px 1px 1px #222, -1px -1px 1px #222, 1px -1px 1px #222, -1px 1px 1px #222, 0 2px 2px #333; }
.controls { height: 53px; display: flex; align-items: center; padding: 0 0 1px 9px; background: linear-gradient(#c8d6e1, #94a3ad 50%, #596a73); }
.controls svg { flex: none; }
.round { margin-right: 16px; }
.round:nth-child(3) { margin: 0 4px 0 1px; }
.seek { position: relative; width: 832px; height: 14px; margin: 0 9px 0 9px; border: 1px solid #4b6d9e; border-radius: 4px; background: #fff; flex: none; }
.done { display: block; width: 501px; height: 12px; background: linear-gradient(#8db4ea, #1b57a5); border-radius: 3px 0 0 3px; }
.knob { position: absolute; left: 498px; top: -4px; width: 8px; height: 20px; border: 1px solid #5c6670; border-radius: 3px; background: linear-gradient(90deg, #fff, #c4cfe0); }
.ff { margin-right: 4px; }
.full { margin: 0 16px 0 18px; }
.volume { position: relative; width: 86px; height: 14px; margin-left: 14px; border: 1px solid #4b5d7e; border-radius: 4px 0 0 4px; background: linear-gradient(#8db4ea, #1b57a5); flex: none; }
.volume .knob { left: 75px; }
.status { height: 24px; background: #000; color: #fff; text-align: right; padding-right: 5px; font: italic 700 15.9px/24px "Noto Sans", sans-serif; }
```
